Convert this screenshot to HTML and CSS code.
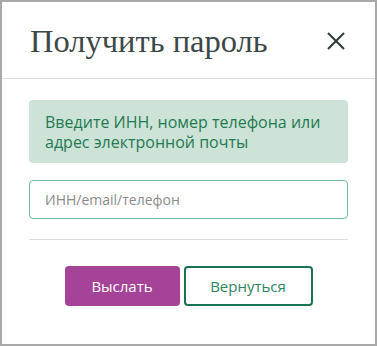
FILE: index.html
```html
<!DOCTYPE html>
<html lang="ru">
<head>
<meta charset="utf-8">
<link rel="stylesheet" href="styles.css">
</head>
<body>
<div class="dialog">
  <div class="header">
    <h1 class="title">Получить пароль</h1>
    <button class="close" aria-label="Закрыть">
      <svg width="18" height="18" viewBox="0 0 18 18"><path d="M1 1L17 17M17 1L1 17" stroke="#2f3a3a" stroke-width="2" fill="none"/></svg>
    </button>
  </div>
  <div class="body">
    <div class="alert">Введите ИНН, номер телефона или адрес электронной почты</div>
    <input class="field" type="text" placeholder="ИНН/email/телефон">
    <div class="sep"></div>
    <div class="actions">
      <button class="btn btn-primary">Выслать</button>
      <button class="btn btn-outline">Вернуться</button>
    </div>
  </div>
</div>
</body>
</html>
```
FILE: styles.css
```css
html, body { margin: 0; padding: 0; background: #fff; }
.dialog {
  width: 377px;
  height: 346px;
  box-sizing: border-box;
  border: 2px solid #a9a9a9;
  background: #fff;
  font-family: "Open Sans", sans-serif;
}
.header {
  height: 77px;
  box-sizing: border-box;
  border-bottom: 1px solid #dedede;
  display: flex;
  align-items: center;
  justify-content: space-between;
  padding: 0 30px 0 28px;
}
.title {
  margin: 0;
  font-family: "Liberation Serif", serif;
  font-weight: normal;
  font-size: 32.5px;
  color: #3b4848;
  padding-top: 3px;
}
.close {
  border: 0;
  background: none;
  padding: 0;
  width: 18px;
  height: 18px;
  display: flex;
  margin-top: 1px;
}
.body {
  padding: 21px 27px 0 27px;
}
.alert {
  background: #cde3d8;
  color: #1f7a50;
  border-radius: 4px;
  padding: 12px 16px 11px;
  font-size: 16px;
  line-height: 20px;
}
.field {
  display: block;
  margin-top: 17px;
  width: 100%;
  height: 39px;
  box-sizing: border-box;
  border: 1px solid #6fbb9b;
  border-radius: 4px;
  padding: 0 15px;
  font-family: "Open Sans", sans-serif;
  font-size: 14px;
  color: #333;
  outline: none;
}
.field::placeholder { color: #8a8a8a; }
.sep {
  margin-top: 20px;
  height: 1px;
  background: #dedede;
}
.actions {
  display: flex;
  justify-content: center;
  gap: 4px;
  margin-top: 26px;
}
.btn {
  height: 40px;
  border-radius: 4px;
  font-family: "Open Sans", sans-serif;
  font-size: 15px;
  box-sizing: border-box;
  padding: 0;
}
.btn-primary {
  width: 115px;
  background: #a44398;
  border: 0;
  color: #fff;
}
.btn-outline {
  width: 129px;
  background: #fff;
  border: 2px solid #1a7350;
  color: #2a8560;
}
```
